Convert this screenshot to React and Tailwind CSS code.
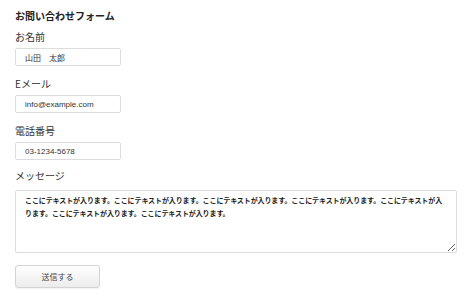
import React from 'react';

const font = { fontFamily: '"Noto Sans CJK JP", "Noto Sans", sans-serif' };

export default function App() {
    const message =
        'ここにテキストが入ります。ここにテキストが入ります。ここにテキストが入ります。ここにテキストが入ります。ここにテキストが入\nります。ここにテキストが入ります。ここにテキストが入ります。';

    return (
        <div className="w-[472px] h-[300px] bg-white px-[15px] pt-[9px] text-[#222] font-['Noto_Sans_CJK_JP',sans-serif]">
            <h1 className="text-[10px] leading-[14px] font-bold">お問い合わせフォーム</h1>

            <label className="block mt-[7px] text-[10px] leading-[14px] text-[#333]">お名前</label>
            <input
                type="text"
                defaultValue="山田　太郎"
                className="block mt-[4px] w-[106px] h-[18px] px-[9px] border border-[#dcdcdc] rounded-[2px] text-[8px] text-[#333] font-['Liberation_Sans','Noto_Sans_CJK_JP',sans-serif] outline-none"
            />

            <label className="block mt-[11px] text-[10px] leading-[14px] text-[#333]">Eメール</label>
            <input
                type="text"
                defaultValue="info@example.com"
                className="block mt-[4px] w-[106px] h-[18px] px-[9px] border border-[#dcdcdc] rounded-[2px] text-[8px] text-[#333] font-['Liberation_Sans','Noto_Sans_CJK_JP',sans-serif] outline-none"
            />

            <label className="block mt-[11px] text-[10px] leading-[14px] text-[#333]">電話番号</label>
            <input
                type="text"
                defaultValue="03-1234-5678"
                className="block mt-[4px] w-[106px] h-[18px] px-[9px] border border-[#dcdcdc] rounded-[2px] text-[8px] text-[#333] font-['Liberation_Sans','Noto_Sans_CJK_JP',sans-serif] outline-none"
            />

            <label className="block mt-[9px] text-[10px] leading-[14px] text-[#333]">メッセージ</label>
            <textarea
                defaultValue={message}
                className="block mt-[7px] w-[442px] h-[63px] pl-[9px] pr-[4px] py-[3px] border border-[#dcdcdc] rounded-[2px] text-[7px] tracking-[-0.1px] leading-[13px] font-bold text-[#222] resize-y outline-none"
                style={font}
            />

            <button
                type="button"
                className="block mt-[12px] w-[85px] h-[23px] border border-[#d4d4d4] rounded-[3px] bg-gradient-to-b from-white to-[#ececec] text-[8px] text-[#444] shadow-[0_1px_1px_rgba(0,0,0,0.05)]"
            >
                送信する
            </button>
        </div>
    );
}
